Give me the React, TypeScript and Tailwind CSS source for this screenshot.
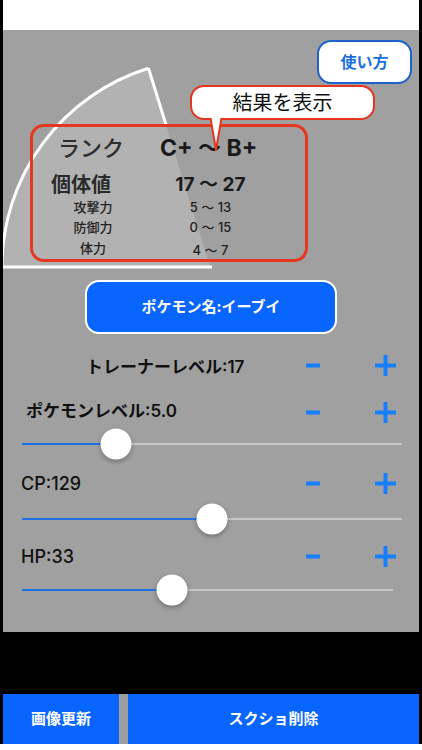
import React from "react";

const FONT = "font-['Inter','Noto_Sans_CJK_JP',sans-serif]";

function MinusIcon() {
  return (
    <svg width="14" height="5" viewBox="0 0 14 5">
      <rect x="0" y="0.5" width="14" height="4" fill="#167ffc" />
    </svg>
  );
}

function PlusIcon() {
  return (
    <svg width="21" height="21" viewBox="0 0 21 21">
      <rect x="8.5" y="0" width="4" height="21" fill="#167ffc" />
      <rect x="0" y="8.5" width="21" height="4" fill="#167ffc" />
    </svg>
  );
}

function Stepper() {
  return (
    <>
      <div className="flex w-[40px] items-center justify-center">
        <MinusIcon />
      </div>
      <div className="ml-[32px] mr-[14px] flex w-[40px] items-center justify-center">
        <PlusIcon />
      </div>
    </>
  );
}

function Slider({ pos, wide }: { pos: number; wide: boolean }) {
  return (
    <div className={`relative ml-[19px] h-[32px] ${wide ? "w-[380px]" : "w-[371px]"}`}>
      <div className="absolute left-0 right-0 top-1/2 h-[2px] -translate-y-1/2 bg-[#c6c6c6]" />
      <div
        className="absolute left-0 top-1/2 h-[2px] -translate-y-1/2 bg-[#1f72e6]"
        style={{ width: pos }}
      />
      <div
        className="absolute top-1/2 h-[31px] w-[31px] -translate-x-1/2 -translate-y-1/2 rounded-full bg-white shadow-[0_2px_5px_rgba(0,0,0,0.3)]"
        style={{ left: pos }}
      />
    </div>
  );
}

function Gauge() {
  // gauge sector centred on the baseline, sweeping from the left up to ~107°
  const cx = 207;
  const cy = 237;
  const r = 208;
  const a = (107.2 * Math.PI) / 180;
  const ex = cx + r * Math.cos(a);
  const ey = cy - r * Math.sin(a);
  const nx = ex + (cx - ex) * 0.29;
  const ny = ey + (cy - ey) * 0.29;
  return (
    <svg
      className="pointer-events-none absolute left-0 top-0"
      width="416"
      height="245"
      viewBox="0 0 416 245"
    >
      <path d={`M ${cx} ${cy} L ${cx - r} ${cy} A ${r} ${r} 0 0 1 ${ex} ${ey} Z`} fill="#b2b2b2" />
      <path
        d={`M ${cx - r} ${cy} A ${r} ${r} 0 0 1 ${ex} ${ey}`}
        fill="none"
        stroke="#ffffff"
        strokeWidth="3"
      />
      <line x1={ex} y1={ey} x2={nx} y2={ny} stroke="#ffffff" strokeWidth="3" />
      <line x1="0" y1={cy} x2={cx + 2} y2={cy} stroke="#ffffff" strokeWidth="3" />
    </svg>
  );
}

export default function App() {
  return (
    <div className={`flex h-[750px] w-[422px] flex-col bg-white ${FONT}`}>
      <div className="flex h-[744px] flex-col bg-black px-[3px]">
        <div className="h-[30px] bg-white" />

        <div className="relative h-[602px] bg-[#a0a0a0]">
          <Gauge />

          <div className="relative flex flex-col">
            <div className="flex justify-end pr-[7px] pt-[10px]">
              <div className="flex h-[44px] w-[95px] items-center justify-center rounded-[14px] border-2 border-[#1d63c8] bg-white text-[16px] font-bold text-[#1a6fe0]">
                使い方
              </div>
            </div>

            <div className="ml-[27px] mt-[40px] flex h-[138px] w-[278px] flex-col rounded-[14px] border-[3px] border-[#e5361f] pt-[7px] text-[#222]">
              <div className="flex h-[28px] items-center whitespace-nowrap">
                <div className="w-[120px] pr-[4px] text-center text-[22px] font-medium text-[#2e2e2e]">ランク</div>
                <div className="pl-[7px] text-[23px] font-bold text-[#1a1a1a]">C+ 〜 B+</div>
              </div>
              <div className="mt-[10px] flex h-[26px] items-center whitespace-nowrap">
                <div className="w-[120px] pr-[24px] text-center text-[20px] font-bold text-[#2a2a2a]">個体値</div>
                <div className="w-[115px] text-center text-[19px] font-bold text-[#1a1a1a]">17 〜 27</div>
              </div>
              <div className="flex h-[20px] items-center whitespace-nowrap text-[13px] font-medium text-[#222]">
                <div className="w-[120px] text-center">攻撃力</div>
                <div className="w-[115px] text-center">5 〜 13</div>
              </div>
              <div className="flex h-[20px] items-center whitespace-nowrap text-[13px] font-medium text-[#222]">
                <div className="w-[120px] text-center">防御力</div>
                <div className="w-[115px] text-center">0 〜 15</div>
              </div>
              <div className="mt-[2px] flex h-[18px] items-center whitespace-nowrap text-[13px] font-medium text-[#222]">
                <div className="w-[120px] text-center">体力</div>
                <div className="w-[115px] pt-[4px] text-center">4 〜 7</div>
              </div>
            </div>

            <div className="mx-auto mt-[18px] flex h-[54px] w-[252px] items-center justify-center rounded-[14px] border-2 border-white bg-[#0866ff] text-[15px] font-bold text-white">
              ポケモン名:イーブイ
            </div>

            <div className="mt-[15px] flex h-[32px] items-center">
              <div className="flex-1 pl-[83px] pt-[6px] text-[17px] font-semibold text-[#111]">
                トレーナーレベル:17
              </div>
              <Stepper />
            </div>

            <div className="mt-[15px] flex h-[32px] items-center">
              <div className="flex-1 pl-[23px] text-[17px] font-semibold text-[#111]">
                ポケモンレベル:5.0
              </div>
              <Stepper />
            </div>
            <Slider pos={94} wide />

            <div className="mt-[7px] flex h-[32px] items-center">
              <div className="flex-1 pl-[18px] text-[18px] font-medium text-[#111]">CP:129</div>
              <Stepper />
            </div>
            <div className="mt-[4px]">
              <Slider pos={190} wide />
            </div>

            <div className="mt-[5px] flex h-[32px] items-center">
              <div className="flex-1 pl-[18px] text-[18px] font-medium text-[#111]">HP:33</div>
              <Stepper />
            </div>
            <div className="mt-[2px]">
              <Slider pos={150} wide={false} />
            </div>
          </div>

          <div className="absolute left-[187px] top-[55px] flex h-[35px] w-[185px] items-center justify-center rounded-[14px] border-2 border-[#e5361f] bg-white text-[20px] text-[#111]">
            結果を表示
          </div>
          <svg className="absolute left-[204px] top-[86px]" width="16" height="36" viewBox="0 0 16 36">
            <polygon points="3.5,1 14.5,1 9,34" fill="#ffffff" />
            <polyline points="3.5,2 9,34 14.5,2" fill="none" stroke="#e5361f" strokeWidth="2" strokeLinejoin="round" />
          </svg>
        </div>

        <div className="h-[62px]" />

        <div className="flex h-[50px] text-[15px] font-bold text-white">
          <div className="flex w-[116px] items-center justify-center bg-[#0866ff]">画像更新</div>
          <div className="w-[9px] bg-[#9e9e9e]" />
          <div className="flex flex-1 items-center justify-center bg-[#0866ff]">スクショ削除</div>
        </div>
      </div>
      <div className="h-[6px] bg-white" />
    </div>
  );
}
